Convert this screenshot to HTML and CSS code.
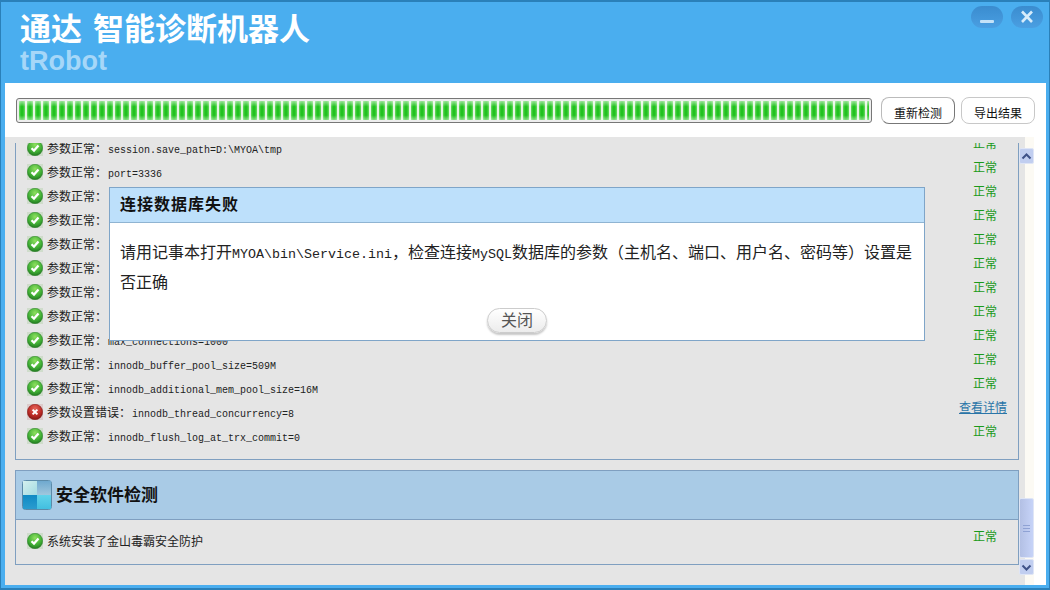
FILE: index.html
```html
<!DOCTYPE html>
<html lang="zh-CN">
<head>
    <meta charset="UTF-8">
    <title>tRobot</title>
    <link rel="stylesheet" href="styles.css">
</head>
<body>
<svg class="defs" width="0" height="0">
    <defs>
        <radialGradient id="okFill" cx="50%" cy="30%" r="75%">
            <stop offset="0" stop-color="#8fe060"/>
            <stop offset="0.6" stop-color="#3fae34"/>
            <stop offset="1" stop-color="#1d6f1c"/>
        </radialGradient>
        <radialGradient id="errFill" cx="50%" cy="30%" r="75%">
            <stop offset="0" stop-color="#e8675c"/>
            <stop offset="0.6" stop-color="#b92a25"/>
            <stop offset="1" stop-color="#7c1311"/>
        </radialGradient>
        <linearGradient id="tileA" x1="0" y1="0" x2="1" y2="1">
            <stop offset="0" stop-color="#d4f0ee"/>
            <stop offset="1" stop-color="#a3dbe2"/>
        </linearGradient>
        <linearGradient id="tileB" x1="0" y1="0" x2="0" y2="1">
            <stop offset="0" stop-color="#6fa9cf"/>
            <stop offset="1" stop-color="#a0c7dd"/>
        </linearGradient>
        <linearGradient id="tileC" x1="0" y1="0" x2="0" y2="1">
            <stop offset="0" stop-color="#0f8ac4"/>
            <stop offset="1" stop-color="#2a9ccf"/>
        </linearGradient>
        <linearGradient id="tileD" x1="0" y1="0" x2="0" y2="1">
            <stop offset="0" stop-color="#62d3ea"/>
            <stop offset="1" stop-color="#42bfe0"/>
        </linearGradient>
        <symbol id="ok" viewBox="0 0 16 16">
            <rect width="16" height="16" fill="#cfdccb"/>
            <circle cx="8" cy="8" r="7.7" fill="url(#okFill)" stroke="#2a7a28" stroke-width="0.5"/>
            <path d="M4.5 8.2 7 10.6 11.5 5.6" fill="none" stroke="#fff" stroke-width="2.2"/>
        </symbol>
        <symbol id="err" viewBox="0 0 16 16">
            <rect width="16" height="16" fill="#dccbcb"/>
            <circle cx="8" cy="8" r="7.7" fill="url(#errFill)" stroke="#7c1311" stroke-width="0.5"/>
            <path d="M5.6 5.6 10.4 10.4M10.4 5.6 5.6 10.4" fill="none" stroke="#fff" stroke-width="2"/>
        </symbol>
    </defs>
</svg>

<div class="window">
    <!-- Header -->
    <div class="header">
        <div class="brand">
            <div class="title">通达 智能诊断机器人</div>
            <div class="subtitle">tRobot</div>
        </div>
        <div class="win-buttons">
            <div class="win-btn">
                <svg width="32" height="22" viewBox="0 0 32 22"><rect x="9" y="14" width="14" height="3" rx="1" fill="#c4e2f8"/></svg>
            </div>
            <div class="win-btn">
                <svg width="32" height="22" viewBox="0 0 32 22"><path d="M11 5.5 21 16M21 5.5 11 16" stroke="#d6ecfb" stroke-width="2.6" fill="none"/></svg>
            </div>
        </div>
    </div>

    <!-- Progress bar and actions -->
    <div class="toolbar">
        <div class="progress"><div class="progress-fill"></div></div>
        <button class="tool-btn tool-btn-active">重新检测</button>
        <button class="tool-btn">导出结果</button>
    </div>

    <!-- Results -->
    <div class="content">
        <div class="scroller">
            <div class="scroll-inner">
                <div class="panel panel-first">
                    <div class="row"><svg class="icon"><use href="#ok"/></svg><span class="msg">参数正常：<span class="code">session.save_path=D:\MYOA\tmp</span></span><span class="status">正常</span></div>
                    <div class="row"><svg class="icon"><use href="#ok"/></svg><span class="msg">参数正常：<span class="code">port=3336</span></span><span class="status">正常</span></div>
                    <div class="row"><svg class="icon"><use href="#ok"/></svg><span class="msg">参数正常：</span><span class="status">正常</span></div>
                    <div class="row"><svg class="icon"><use href="#ok"/></svg><span class="msg">参数正常：</span><span class="status">正常</span></div>
                    <div class="row"><svg class="icon"><use href="#ok"/></svg><span class="msg">参数正常：</span><span class="status">正常</span></div>
                    <div class="row"><svg class="icon"><use href="#ok"/></svg><span class="msg">参数正常：</span><span class="status">正常</span></div>
                    <div class="row"><svg class="icon"><use href="#ok"/></svg><span class="msg">参数正常：</span><span class="status">正常</span></div>
                    <div class="row"><svg class="icon"><use href="#ok"/></svg><span class="msg">参数正常：</span><span class="status">正常</span></div>
                    <div class="row"><svg class="icon"><use href="#ok"/></svg><span class="msg">参数正常：<span class="code">max_connections=1000</span></span><span class="status">正常</span></div>
                    <div class="row"><svg class="icon"><use href="#ok"/></svg><span class="msg">参数正常：<span class="code">innodb_buffer_pool_size=509M</span></span><span class="status">正常</span></div>
                    <div class="row"><svg class="icon"><use href="#ok"/></svg><span class="msg">参数正常：<span class="code">innodb_additional_mem_pool_size=16M</span></span><span class="status">正常</span></div>
                    <div class="row"><svg class="icon"><use href="#err"/></svg><span class="msg">参数设置错误：<span class="code">innodb_thread_concurrency=8</span></span><a class="status-link" href="#">查看详情</a></div>
                    <div class="row"><svg class="icon"><use href="#ok"/></svg><span class="msg">参数正常：<span class="code">innodb_flush_log_at_trx_commit=0</span></span><span class="status">正常</span></div>
                </div>

                <div class="panel panel-second">
                    <div class="panel-head">
                        <svg width="30" height="30" viewBox="0 0 30 30">
                            <rect x="0.5" y="0.5" width="29" height="29" rx="3" fill="#7fb4d4" stroke="#5b8aa8"/>
                            <rect x="1" y="1" width="14" height="14" fill="url(#tileA)"/>
                            <rect x="15" y="1" width="14" height="14" fill="url(#tileB)"/>
                            <rect x="1" y="15" width="14" height="14" fill="url(#tileC)"/>
                            <rect x="15" y="15" width="14" height="14" fill="url(#tileD)"/>
                        </svg>
                        <span class="panel-title">安全软件检测</span>
                    </div>
                    <div class="row row-single"><svg class="icon"><use href="#ok"/></svg><span class="msg">系统安装了金山毒霸安全防护</span><span class="status">正常</span></div>
                </div>
            </div>

            <!-- Scrollbar -->
            <div class="scrollbar">
                <div class="sb-btn">
                    <svg width="13" height="13" viewBox="0 0 13 13"><path d="M2.5 8.5 6.5 4.5 10.5 8.5" fill="none" stroke="#3f5288" stroke-width="2"/></svg>
                </div>
                <div class="sb-track">
                    <div class="sb-thumb">
                        <span class="sb-grip"></span>
                    </div>
                </div>
                <div class="sb-btn">
                    <svg width="13" height="13" viewBox="0 0 13 13"><path d="M2.5 4.5 6.5 8.5 10.5 4.5" fill="none" stroke="#3f5288" stroke-width="2"/></svg>
                </div>
            </div>
        </div>

        <!-- Message dialog -->
        <div class="dialog">
            <div class="dialog-head">连接数据库失败</div>
            <div class="dialog-body">请用记事本打开<span class="code-lg">MYOA\bin\Service.ini</span>，检查连接<span class="code-lg">MySQL</span>数据库的参数（主机名、端口、用户名、密码等）设置是否正确</div>
            <div class="dialog-foot"><button class="close-btn">关闭</button></div>
        </div>
    </div>
</div>
</body>
</html>
```

FILE: styles.css
```css
* {
    box-sizing: border-box;
    margin: 0;
    padding: 0;
}

body {
    width: 1050px;
    height: 590px;
    overflow: hidden;
    font-family: "Noto Sans CJK SC", "Liberation Sans", sans-serif;
    font-size: 12px;
    color: #222;
}

.defs {
    position: absolute;
}

/* Window frame */
.window {
    width: 1050px;
    height: 590px;
    display: flex;
    flex-direction: column;
    background-color: #4aaeef;
    border: solid #2a80b9;
    border-width: 2px 1px 2px 1px;
    padding: 0 3px 3px 4px;
}

/* Header */
.header {
    height: 81px;
    flex: none;
    display: flex;
    justify-content: space-between;
    padding: 4px 3px 0 15px;
}

.title {
    font-size: 31px;
    font-weight: 700;
    line-height: 42px;
    color: #fff;
    white-space: pre;
    word-spacing: 4px;
}

.subtitle {
    font-family: "Liberation Sans", sans-serif;
    font-size: 27px;
    font-weight: 700;
    line-height: 27px;
    color: #a6d7f8;
}

.win-buttons {
    display: flex;
    gap: 8px;
}

.win-btn {
    width: 32px;
    height: 22px;
    border-radius: 11px;
    background: linear-gradient(#3a8ccf, #4a9fe2);
}

/* Toolbar */
.toolbar {
    height: 54px;
    flex: none;
    display: flex;
    align-items: center;
    gap: 6px;
    padding: 1px 11px 0 11px;
    background-color: #fff;
}

.progress {
    width: 856px;
    height: 25px;
    margin-right: 3px;
    padding: 2px;
    border: 1px solid #777;
    border-radius: 3px;
    background-color: #eee;
}

.progress-fill {
    height: 100%;
    background:
        linear-gradient(180deg, rgba(255, 255, 255, 0.55) 0, rgba(255, 255, 255, 0) 30%, rgba(255, 255, 255, 0) 75%, rgba(255, 255, 255, 0.45) 100%),
        repeating-linear-gradient(90deg, #6adb62 0, #21c21f 2px, #21c21f 4px, #6adb62 6px, #e4f5e2 6px, #e4f5e2 8px);
}

.tool-btn {
    width: 74px;
    height: 27px;
    padding-top: 3px;
    border: 1px solid #c8c8c8;
    border-radius: 8px;
    background-color: #fff;
    font-family: inherit;
    font-size: 12px;
    color: #111;
}

.tool-btn-active {
    border-color: #bbb #777 #777 #bbb;
}

/* Content */
.content {
    position: relative;
    flex: 1;
    display: flex;
    background: linear-gradient(90deg, #e5e5e5 0, #e5e5e5 1020px, #fcfaf4 1020px, #fcfaf4 1029px, #fff 1029px);
    padding: 6px 0 10px 10px;
}

.scroller {
    width: 1019px;
    flex: none;
    height: 432px;
    overflow: hidden;
    position: relative;
}

.scroll-inner {
    width: 1004px;
}

.panel {
    border: 1px solid #7f9fc0;
}

.panel-first {
    margin-top: -7px;
    height: 324px;
    border-top: 0;
}

.panel-second {
    margin-top: 10px;
    height: 95px;
}

.panel-head {
    height: 49px;
    display: flex;
    align-items: center;
    gap: 4px;
    padding-left: 6px;
    background-color: #a9cbe6;
    border-bottom: 1px solid #7f9fc0;
}

.panel-title {
    font-size: 17px;
    font-weight: 700;
    line-height: 20px;
    margin-top: -3px;
    color: #111;
}

/* Result rows */
.row {
    height: 24px;
    display: flex;
    align-items: center;
    padding-left: 11px;
}

.row-single {
    margin-top: 9px;
}

.icon {
    width: 16px;
    height: 16px;
    flex: none;
    margin-right: 4px;
}

.msg {
    flex: 1;
    margin-top: -2px;
    white-space: nowrap;
}

.code {
    margin-left: 1px;
    font-family: "Liberation Mono", monospace;
    font-size: 10px;
}

.status {
    width: 45px;
    flex: none;
    margin-bottom: 10px;
    color: #1a9a1a;
    line-height: 14px;
}

.status-link {
    width: 48px;
    flex: none;
    margin: 0 11px 10px 0;
    color: #2a75a8;
    line-height: 14px;
    text-decoration: underline;
}

/* Scrollbar, drawn over the panel edge */
.scrollbar {
    position: absolute;
    right: 0;
    top: 5px;
    width: 15px;
    height: 427px;
    display: flex;
    flex-direction: column;
}

.sb-btn {
    height: 16px;
    flex: none;
    display: flex;
    align-items: center;
    justify-content: center;
    background-color: #c1cef0;
    border: 1px solid #dfe5f5;
    border-radius: 2px;
}

.sb-track {
    flex: 1;
    display: flex;
    flex-direction: column;
    justify-content: flex-end;
}

.sb-thumb {
    height: 60px;
    margin-bottom: 1px;
    display: flex;
    align-items: center;
    justify-content: center;
    background: linear-gradient(90deg, #b3c0e4, #c6d3f8);
    border: 1px solid #dfe5f5;
    border-radius: 2px;
}

.sb-grip {
    width: 7px;
    height: 7px;
    border-top: 1px solid #8fa2d4;
    border-bottom: 1px solid #8fa2d4;
    background: linear-gradient(#8fa2d4, #8fa2d4) center / 100% 1px no-repeat;
}

/* Dialog */
.dialog {
    position: absolute;
    left: 104px;
    top: 50px;
    width: 816px;
    height: 154px;
    background-color: #fff;
    border: 1px solid #7fa5c8;
    display: flex;
    flex-direction: column;
}

.dialog-head {
    height: 35px;
    flex: none;
    padding-left: 10px;
    background-color: #bde0fb;
    border-bottom: 1px solid #8fb4d2;
    font-size: 16px;
    font-weight: 700;
    line-height: 31px;
    letter-spacing: 1px;
    color: #111;
}

.dialog-body {
    padding: 13px 10px 0 10px;
    font-size: 16px;
    line-height: 30px;
    color: #222;
}

.code-lg {
    font-family: "Liberation Mono", monospace;
    font-size: 13.33px;
    line-height: 1;
}

.dialog-foot {
    display: flex;
    justify-content: center;
    margin-top: 12px;
}

.close-btn {
    width: 60px;
    height: 25px;
    padding-bottom: 4px;
    border: 1px solid #ccc;
    border-radius: 13px;
    background: linear-gradient(#fff, #ececec);
    box-shadow: 0 2px 2px #c8c8c8;
    font-family: inherit;
    font-size: 16px;
    line-height: 20px;
    color: #555;
}
```
